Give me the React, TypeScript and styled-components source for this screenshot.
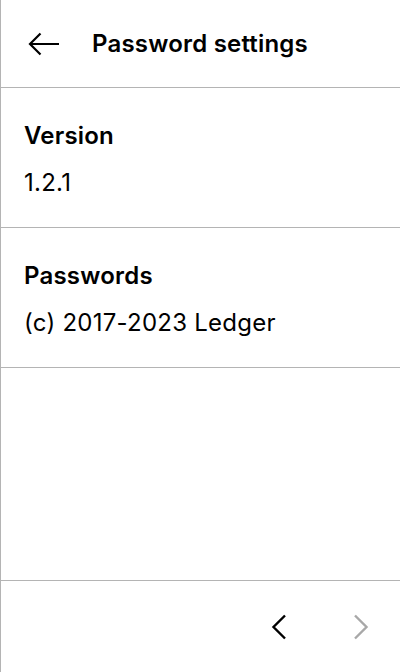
import styled, { createGlobalStyle } from "styled-components";

const GlobalStyle = createGlobalStyle`
  html, body {
    margin: 0;
    padding: 0;
    background: #ffffff;
  }
  body {
    font-family: Inter, "Noto Sans", "Liberation Sans", sans-serif;
    color: #000000;
  }
`;

const lineColor = "#b4b4b4";

const infos = [
    { title: "Version", value: "1.2.1" },
    { title: "Passwords", value: "(c) 2017-2023 Ledger" },
];

function App() {
    return (
        <>
            <GlobalStyle />
            <Screen>
                <Header>
                    <BackButton aria-label="Back">
                        <svg width="32" height="24" viewBox="0 0 32 24" fill="none">
                            <path
                                d="M31 12H2.5M12.5 1.5L2 12l10.5 10.5"
                                stroke="#000"
                                strokeWidth="2.2"
                            />
                        </svg>
                    </BackButton>
                    <Title>Password settings</Title>
                </Header>

                {infos.map((info) => (
                    <InfoRow key={info.title}>
                        <InfoTitle>{info.title}</InfoTitle>
                        <InfoValue>{info.value}</InfoValue>
                    </InfoRow>
                ))}

                <Spacer />

                <Footer>
                    <NavButton aria-label="Previous page">
                        <svg width="16" height="26" viewBox="0 0 16 26" fill="none">
                            <path d="M14 1.5L2.5 13 14 24.5" stroke="#000" strokeWidth="2.4" />
                        </svg>
                    </NavButton>
                    <NavButton aria-label="Next page" disabled>
                        <svg width="16" height="26" viewBox="0 0 16 26" fill="none">
                            <path d="M2 1.5L13.5 13 2 24.5" stroke="#a8a8a8" strokeWidth="2.4" />
                        </svg>
                    </NavButton>
                </Footer>
            </Screen>
        </>
    );
}

const Screen = styled.div`
    display: flex;
    flex-direction: column;
    width: 400px;
    height: 672px;
    box-sizing: border-box;
    border-left: 1px solid ${lineColor};
    overflow: hidden;
`;

const Header = styled.header`
    display: flex;
    align-items: center;
    height: 87px;
    flex-shrink: 0;
    border-bottom: 1px solid ${lineColor};
`;

const BackButton = styled.button`
    display: flex;
    align-items: center;
    justify-content: center;
    width: 90px;
    height: 87px;
    padding: 0;
    border: none;
    background: none;
    box-sizing: border-box;
    margin-left: -2px;
`;

const Title = styled.h1`
    margin: 0 0 0 3px;
    font-size: 24px;
    line-height: 32px;
    font-weight: 600;
    letter-spacing: 0.2px;
`;

const InfoRow = styled.section`
    display: flex;
    flex-direction: column;
    gap: 15px;
    height: 140px;
    flex-shrink: 0;
    padding: 32px 0 0 23px;
    box-sizing: border-box;
    border-bottom: 1px solid ${lineColor};
`;

const InfoTitle = styled.h2`
    margin: 0;
    font-size: 24px;
    line-height: 32px;
    font-weight: 600;
    letter-spacing: 0.2px;
`;

const InfoValue = styled.p`
    margin: 0;
    font-size: 24px;
    line-height: 32px;
    font-weight: 400;
    letter-spacing: 0.25px;
`;

const Spacer = styled.div`
    flex: 1;
    border-bottom: 1px solid ${lineColor};
`;

const Footer = styled.footer`
    display: flex;
    align-items: center;
    justify-content: flex-end;
    gap: 4px;
    height: 91px;
    flex-shrink: 0;
`;

const NavButton = styled.button`
    display: flex;
    align-items: center;
    justify-content: center;
    width: 78px;
    height: 91px;
    padding: 0;
    border: none;
    background: none;
`;

export default App;
